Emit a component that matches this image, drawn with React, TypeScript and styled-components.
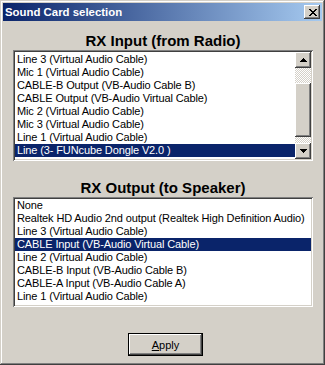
import React from 'react'
import styled, { createGlobalStyle } from 'styled-components'

const GlobalStyle = createGlobalStyle`
  html, body {
    margin: 0;
    padding: 0;
    background: #d4d0c8;
  }
  * {
    box-sizing: border-box;
  }
`

const inputDevices = [
  'Line 3 (Virtual Audio Cable)',
  'Mic 1 (Virtual Audio Cable)',
  'CABLE-B Output (VB-Audio Cable B)',
  'CABLE Output (VB-Audio Virtual Cable)',
  'Mic 2 (Virtual Audio Cable)',
  'Mic 3 (Virtual Audio Cable)',
  'Line 1 (Virtual Audio Cable)',
  'Line (3- FUNcube Dongle V2.0  )',
]

const outputDevices = [
  'None',
  'Realtek HD Audio 2nd output (Realtek High Definition Audio)',
  'Line 3 (Virtual Audio Cable)',
  'CABLE Input (VB-Audio Virtual Cable)',
  'Line 2 (Virtual Audio Cable)',
  'CABLE-B Input (VB-Audio Cable B)',
  'CABLE-A Input (VB-Audio Cable A)',
  'Line 1 (Virtual Audio Cable)',
]

// classic 8x7 close cross, 2px strokes
const crossPixels: [number, number][] = []
for (let y = 0; y < 7; y++) {
  crossPixels.push([y, y], [y + 1, y], [6 - y, y], [7 - y, y])
}

const CloseIcon = () => (
  <svg width='8' height='7' viewBox='0 0 8 7' shapeRendering='crispEdges'>
    {crossPixels.map(([x, y], i) => (
      <rect key={i} x={x} y={y} width='1' height='1' fill='#000' />
    ))}
  </svg>
)

const Arrow = ({ down }: { down?: boolean }) => (
  <svg width='7' height='4' viewBox='0 0 7 4' shapeRendering='crispEdges'>
    {down ? (
      <>
        <rect x='0' y='0' width='7' height='1' fill='#000' />
        <rect x='1' y='1' width='5' height='1' fill='#000' />
        <rect x='2' y='2' width='3' height='1' fill='#000' />
        <rect x='3' y='3' width='1' height='1' fill='#000' />
      </>
    ) : (
      <>
        <rect x='3' y='0' width='1' height='1' fill='#000' />
        <rect x='2' y='1' width='3' height='1' fill='#000' />
        <rect x='1' y='2' width='5' height='1' fill='#000' />
        <rect x='0' y='3' width='7' height='1' fill='#000' />
      </>
    )}
  </svg>
)

const DeviceList = ({
  items,
  selected,
  scroll,
  height,
  top,
}: {
  items: string[]
  selected: number
  scroll?: boolean
  height: number
  top: number
}) => (
  <ListBox style={{ height }}>
    <Rows $top={top}>
      {items.map((item, i) => (
        <Row key={item + i} $selected={i === selected}>
          {item}
        </Row>
      ))}
    </Rows>
    {scroll && (
      <ScrollBar>
        <ScrollButton>
          <Arrow />
        </ScrollButton>
        <Track>
          <Thumb />
        </Track>
        <ScrollButton>
          <Arrow down />
        </ScrollButton>
      </ScrollBar>
    )}
  </ListBox>
)

const App = () => {
  return (
    <>
      <GlobalStyle />
      <Window>
        <TitleBar>
          <Title>Sound Card selection</Title>
          <CloseButton>
            <CloseIcon />
          </CloseButton>
        </TitleBar>
        <Body>
          <Heading $gap={11}>RX Input (from Radio)</Heading>
          <DeviceList items={inputDevices} selected={7} scroll height={111} top={1} />
          <Heading $gap={18}>RX Output (to Speaker)</Heading>
          <DeviceList items={outputDevices} selected={3} height={110} top={0} />
          <ApplyButton>
            <u>A</u>pply
          </ApplyButton>
        </Body>
      </Window>
    </>
  )
}

const raised = `
  box-shadow: inset -1px -1px #404040, inset 1px 1px #ffffff,
    inset -2px -2px #808080, inset 2px 2px #d4d0c8;
`

const Window = styled.div`
  width: 325px;
  height: 365px;
  padding: 3px;
  background: #d4d0c8;
  box-shadow: inset -1px -1px #404040, inset 1px 1px #d4d0c8,
    inset -2px -2px #808080, inset 2px 2px #ffffff;
  display: flex;
  flex-direction: column;
  font-family: 'Liberation Sans', Arial, sans-serif;
`

const TitleBar = styled.div`
  height: 18px;
  display: flex;
  align-items: center;
  justify-content: space-between;
  padding: 0 2px 0 2px;
  background: linear-gradient(to right, #0a246a, #a6caf0);
`

const Title = styled.span`
  color: #ffffff;
  font-weight: bold;
  font-size: 11.4px;
  line-height: 14px;
`

const CloseButton = styled.div`
  width: 16px;
  height: 14px;
  display: flex;
  align-items: center;
  justify-content: center;
  padding-left: 1px;
  background: #d4d0c8;
  ${raised}
`

const Body = styled.div`
  flex: 1;
  display: flex;
  flex-direction: column;
  padding: 0 9px 0 10px;
`

const Heading = styled.div<{ $gap: number }>`
  margin-top: ${(p) => p.$gap}px;
  height: 18px;
  line-height: 18px;
  text-align: center;
  font-size: 15px;
  font-weight: bold;
  color: #000000;
`

const ListBox = styled.div`
  width: 300px;
  padding: 2px;
  display: flex;
  background: #ffffff;
  box-shadow: inset 1px 1px #808080, inset -1px -1px #ffffff,
    inset 2px 2px #404040, inset -2px -2px #d4d0c8;
`

const Rows = styled.div<{ $top: number }>`
  flex: 1;
  padding-top: ${(p) => p.$top}px;
  overflow: hidden;
`

const Row = styled.div<{ $selected: boolean }>`
  height: 13px;
  line-height: 13px;
  padding-left: 2px;
  font-size: 11px;
  letter-spacing: -0.12px;
  white-space: nowrap;
  color: ${(p) => (p.$selected ? '#ffffff' : '#000000')};
  background: ${(p) => (p.$selected ? '#0a246a' : 'transparent')};
`

const ScrollBar = styled.div`
  width: 16px;
  display: flex;
  flex-direction: column;
`

const ScrollButton = styled.div`
  width: 16px;
  height: 16px;
  display: flex;
  align-items: center;
  justify-content: center;
  background: #d4d0c8;
  ${raised}
`

const Track = styled.div`
  flex: 1;
  padding-top: 15px;
  background: repeating-conic-gradient(#ffffff 0 25%, #d4d0c8 0 50%) 0 0 / 2px 2px;
`

const Thumb = styled.div`
  height: 54px;
  background: #d4d0c8;
  ${raised}
`

const ApplyButton = styled.div`
  margin: 26px 0 0 115px;
  width: 75px;
  height: 23px;
  display: flex;
  align-items: center;
  justify-content: center;
  font-size: 11px;
  color: #000000;
  background: #d4d0c8;
  border: 1px solid #000000;
  ${raised}
`

export default App
